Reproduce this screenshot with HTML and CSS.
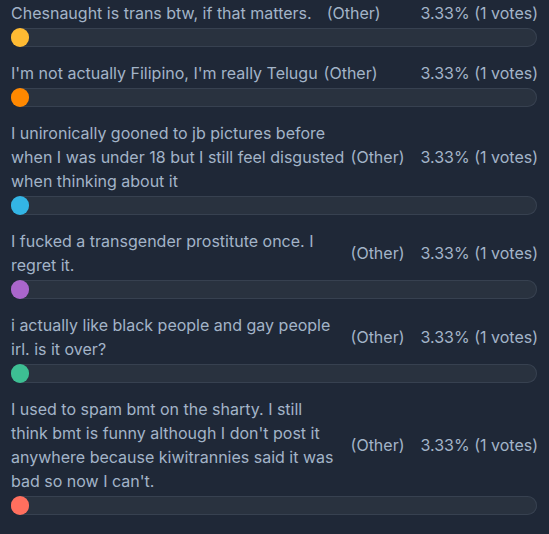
FILE: index.html
```html
<!DOCTYPE html>
<html>
<head>
<meta charset="utf-8">
<link rel="stylesheet" href="styles.css">
</head>
<body>
<div class="poll">
  <div class="opt">
    <div class="head">
      <span class="text trail">Chesnaught is trans btw, if that matters.</span>
      <span class="other">(Other)</span>
      <span class="pct">3.33% (1 votes)</span>
    </div>
    <div class="bar"><div class="fill c1" style="width:3.33%"></div></div>
  </div>
  <div class="opt">
    <div class="head">
      <span class="text">I'm not actually Filipino, I'm really Telugu</span>
      <span class="other">(Other)</span>
      <span class="pct">3.33% (1 votes)</span>
    </div>
    <div class="bar"><div class="fill c2" style="width:3.33%"></div></div>
  </div>
  <div class="opt">
    <div class="head">
      <span class="text">I unironically gooned to jb pictures before when I was under 18 but I still feel disgusted when thinking about it</span>
      <span class="other">(Other)</span>
      <span class="pct">3.33% (1 votes)</span>
    </div>
    <div class="bar"><div class="fill c3" style="width:3.33%"></div></div>
  </div>
  <div class="opt">
    <div class="head">
      <span class="text">I fucked a transgender prostitute once. I regret it.</span>
      <span class="other">(Other)</span>
      <span class="pct">3.33% (1 votes)</span>
    </div>
    <div class="bar"><div class="fill c4" style="width:3.33%"></div></div>
  </div>
  <div class="opt">
    <div class="head">
      <span class="text">i actually like black people and gay people irl. is it over?</span>
      <span class="other">(Other)</span>
      <span class="pct">3.33% (1 votes)</span>
    </div>
    <div class="bar"><div class="fill c5" style="width:3.33%"></div></div>
  </div>
  <div class="opt">
    <div class="head">
      <span class="text">I used to spam bmt on the sharty. I still<br>think bmt is funny although I don't post it anywhere because kiwitrannies said it was bad so now I can't.</span>
      <span class="other">(Other)</span>
      <span class="pct">3.33% (1 votes)</span>
    </div>
    <div class="bar"><div class="fill c6" style="width:3.33%"></div></div>
  </div>
</div>
</body>
</html>
```

FILE: styles.css
```css
html, body {
  margin: 0;
  padding: 0;
  background: #1f2837;
}
body {
  font-family: Inter, "Noto Sans", sans-serif;
  font-size: 16px;
  line-height: 24px;
  color: #a3b4c8;
}
.poll {
  padding: 1px 11px 0 11px;
  display: flex;
  flex-direction: column;
  gap: 14px;
}
.opt {
  display: flex;
  flex-direction: column;
  gap: 3px;
}
.head {
  display: flex;
  align-items: center;
}
.text {
  flex: 0 1 auto;
  min-width: 0;
}
.text.trail {
  padding-right: 9px;
}
.other {
  flex: none;
  margin-left: 6px;
  white-space: nowrap;
}
.pct {
  flex: none;
  margin-left: auto;
  padding-left: 16px;
  white-space: nowrap;
}
.bar {
  height: 19px;
  margin-right: 1px;
  border-radius: 10px;
  background: #29323f;
  box-shadow: inset 0 0 0 1px #374150;
  display: flex;
}
.fill {
  height: 19px;
  min-width: 18px;
  border-radius: 10px;
}
.c1 { background: #ffbb33; }
.c2 { background: #ff8800; }
.c3 { background: #33b5e5; }
.c4 { background: #aa66cc; }
.c5 { background: #3dbf93; }
.c6 { background: #ff6f5e; }
```
